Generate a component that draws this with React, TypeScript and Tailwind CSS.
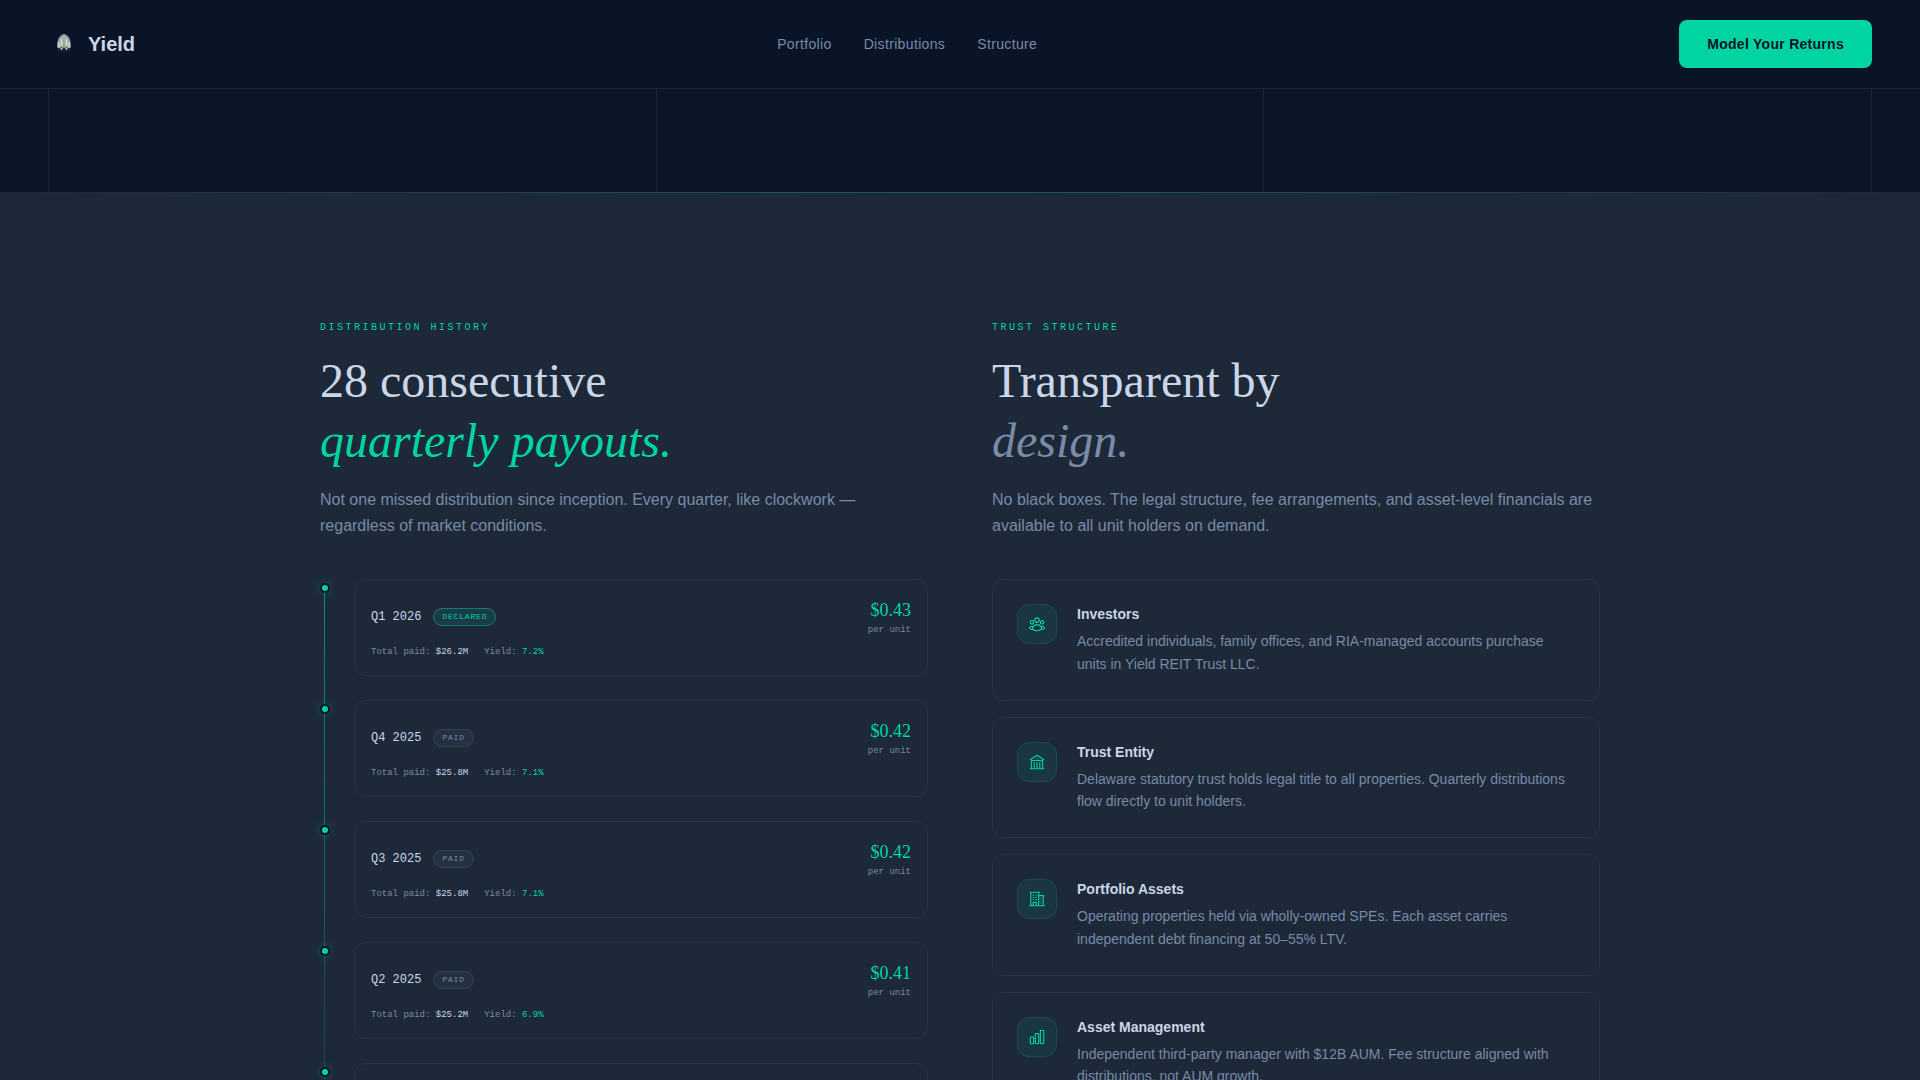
import type { IconType } from "react-icons";
import {
  HiOutlineBuildingLibrary,
  HiOutlineBuildingOffice2,
  HiOutlineChartBar,
  HiOutlineUserGroup,
} from "react-icons/hi2";

type Payout = {
  quarter: string;
  status: "Declared" | "Paid";
  perUnit: string;
  total: string;
  rate: string;
};

const PAYOUTS: Payout[] = [
  { quarter: "Q1 2026", status: "Declared", perUnit: "$0.43", total: "$26.2M", rate: "7.2%" },
  { quarter: "Q4 2025", status: "Paid", perUnit: "$0.42", total: "$25.8M", rate: "7.1%" },
  { quarter: "Q3 2025", status: "Paid", perUnit: "$0.42", total: "$25.8M", rate: "7.1%" },
  { quarter: "Q2 2025", status: "Paid", perUnit: "$0.41", total: "$25.2M", rate: "6.9%" },
  { quarter: "Q1 2025", status: "Paid", perUnit: "$0.41", total: "$25.2M", rate: "6.9%" },
];

const ENTITIES: { title: string; text: string; icon: IconType }[] = [
  {
    title: "Investors",
    text: "Accredited individuals, family offices, and RIA-managed accounts purchase units in Yield REIT Trust LLC.",
    icon: HiOutlineUserGroup,
  },
  {
    title: "Trust Entity",
    text: "Delaware statutory trust holds legal title to all properties. Quarterly distributions flow directly to unit holders.",
    icon: HiOutlineBuildingLibrary,
  },
  {
    title: "Portfolio Assets",
    text: "Operating properties held via wholly-owned SPEs. Each asset carries independent debt financing at 50–55% LTV.",
    icon: HiOutlineBuildingOffice2,
  },
  {
    title: "Asset Management",
    text: "Independent third-party manager with $12B AUM. Fee structure aligned with distributions, not AUM growth.",
    icon: HiOutlineChartBar,
  },
];

const MONO = "font-['Liberation_Mono',monospace]";
const SERIF = "font-['Liberation_Serif',serif]";

function Logo() {
  return (
    <svg width="32" height="32" viewBox="0 0 32 32" aria-hidden="true">
      <path
        d="M16 6c-2.600.8-4.600 2.400-5.500 4.600C9.500 13 9 16.200 9.200 19.600l2.800 1.200 2-2.300h4l2 2.300 2.800-1.200c.2-3.400-.3-6.600-1.300-9C20.600 8.400 18.600 6.800 16 6z"
        fill="#9ba2a4"
      />
      <path d="M13.200 11v7.500M18.800 11v7.500M10.800 14v5.500M21.200 14v5.500" stroke="#dfe3e1" strokeWidth="1.200" />
      <path d="M14.600 9h2.800v10.500h-2.800z" fill="#e3efe6" />
      <path d="M16 9.500v9.500" stroke="#2f8f57" strokeWidth="1.200" />
      <path d="M12.800 21.800l2-2.300M19.200 21.800l-2-2.300" stroke="#cfe6d8" strokeWidth="1.200" />
      <path d="M10.500 21.500v2M13.500 22.500v2M16 21v3M18.500 22.500v2M21.500 21.500v2" stroke="#2c3949" strokeWidth="1" />
    </svg>
  );
}

function Header() {
  return (
    <header className="flex shrink-0 items-center justify-between border-b border-[#1a2636] bg-[#091526] px-12 py-5">
      <a href="#" className="flex items-center gap-2 text-xl font-bold text-[#ccd6e8]">
        <Logo />
        Yield
      </a>
      <nav className="flex gap-8 text-sm tracking-wide text-[#7a8ba8]">
        <a href="#portfolio">Portfolio</a>
        <a href="#distributions">Distributions</a>
        <a href="#structure">Structure</a>
      </nav>
      <button
        type="button"
        className="h-12 rounded-lg bg-[#00d4a0] px-7 text-sm font-bold tracking-[0.02em] text-[#0a1628]"
      >
        Model Your Returns
      </button>
    </header>
  );
}

type HeadingProps = {
  eyebrow: string;
  title: string;
  accent: string;
  accentClass: string;
  text: string;
};

function Heading({ eyebrow, title, accent, accentClass, text }: HeadingProps) {
  return (
    <div className="mb-10">
      <p className={`mb-4 text-[10px] leading-[15px] tracking-[0.25em] text-[#00d4a0] uppercase ${MONO}`}>
        {eyebrow}
      </p>
      <h2 className={`mb-4 text-5xl leading-[60px] text-[#ccd6e8] ${SERIF}`}>
        {title}
        <br />
        <em className={accentClass}>{accent}</em>
      </h2>
      <p className="text-base leading-[26px] text-[#788aa5]">{text}</p>
    </div>
  );
}

function PayoutRow({ payout }: { payout: Payout }) {
  const badge =
    payout.status === "Declared"
      ? "border-[#147c6d] bg-[#1a3b48] text-[#00d4a0]"
      : "border-[#354253] bg-[#243142] text-[#788aa5]";

  return (
    <li className="flex gap-6">
      <span className="relative mt-1 grid size-2.5 shrink-0 place-items-center rounded-full bg-[#0a1628] shadow-[0_0_8px_rgba(0,212,160,0.3)]">
        <span className="size-1.5 rounded-full bg-[#00d4a0]" />
      </span>
      <div className="flex-1 rounded-xl border border-[#263445] p-4">
        <div className="mb-2 flex items-center justify-between">
          <div className="flex items-center gap-3">
            <span className={`text-xs text-[#ccd6e8] ${MONO}`}>{payout.quarter}</span>
            <span
              className={`rounded-full border px-2 py-0.5 text-[8px] leading-3 tracking-widest uppercase ${MONO} ${badge}`}
            >
              {payout.status}
            </span>
          </div>
          <div className="text-right">
            <div className={`text-lg text-[#00d4a0] ${SERIF}`}>{payout.perUnit}</div>
            <div className={`text-[9px] leading-[13px] text-[#788aa5] ${MONO}`}>per unit</div>
          </div>
        </div>
        <div className={`flex gap-4 text-[9px] leading-[14px] text-[#788aa5] ${MONO}`}>
          <span>
            Total paid: <span className="text-[#ccd6e8]">{payout.total}</span>
          </span>
          <span>
            Yield: <span className="text-[#00d4a0]">{payout.rate}</span>
          </span>
        </div>
      </div>
    </li>
  );
}

export default function App() {
  return (
    <div className="flex h-screen flex-col overflow-hidden bg-[#0b1729] font-['Liberation_Sans',sans-serif]">
      <Header />

      {/* Tail of the portfolio grid */}
      <div id="portfolio" className="shrink-0 px-12">
        <div className="grid h-[103px] grid-cols-3 gap-px border-x border-[#1a2636] bg-[#1a2636]">
          <div className="bg-[#0b1729]" />
          <div className="bg-[#0b1729]" />
          <div className="bg-[#0b1729]" />
        </div>
      </div>

      <main className="shrink-0 bg-[#1d2939]">
        <div className="h-px bg-linear-to-r from-[#1d2939] via-[#1f5c5d] to-[#1d2939]" />
        <div className="mx-auto grid max-w-7xl grid-cols-2 gap-16 pt-[127px] pb-32">
          <section id="distributions">
            <Heading
              eyebrow="Distribution History"
              title="28 consecutive"
              accent="quarterly payouts."
              accentClass="text-[#00d4a0]"
              text="Not one missed distribution since inception. Every quarter, like clockwork — regardless of market conditions."
            />
            <div className="relative">
              <div className="absolute top-2 bottom-0 left-1 w-px bg-linear-to-b from-[#00d4a0]/60 to-[#00d4a0]/10" />
              <ol className="flex flex-col gap-6">
                {PAYOUTS.map((payout) => (
                  <PayoutRow key={payout.quarter} payout={payout} />
                ))}
              </ol>
            </div>
          </section>

          <section id="structure">
            <Heading
              eyebrow="Trust Structure"
              title="Transparent by"
              accent="design."
              accentClass="text-[#7a8ba8]"
              text="No black boxes. The legal structure, fee arrangements, and asset-level financials are available to all unit holders on demand."
            />
            <div className="flex flex-col gap-4">
              {ENTITIES.map(({ title, text, icon: Icon }) => (
                <article key={title} className="flex items-start gap-5 rounded-xl border border-[#263445] p-6">
                  <div className="grid size-10 shrink-0 place-items-center rounded-xl border border-[#1a4b50] bg-[#1a3643] text-[#00d4a0]">
                    <Icon size={18} />
                  </div>
                  <div>
                    <h3 className="mb-1.5 text-sm leading-5 font-bold text-[#ccd6e8]">{title}</h3>
                    <p className="text-sm leading-relaxed text-[#788aa5]">{text}</p>
                  </div>
                </article>
              ))}
            </div>
          </section>
        </div>
      </main>
    </div>
  );
}
